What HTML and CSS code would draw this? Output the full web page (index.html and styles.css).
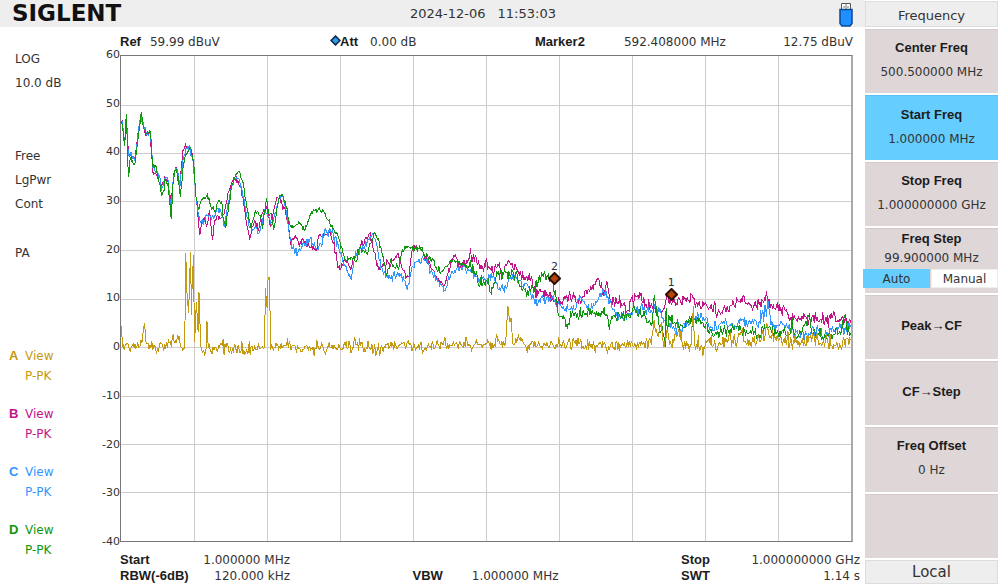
FILE: index.html
```html
<!DOCTYPE html>
<html lang="en">
<head>
<meta charset="utf-8">
<title>SIGLENT Spectrum Analyzer</title>
<link rel="stylesheet" href="styles.css">
</head>
<body>
<div class="screen">
  <main class="main">
    <header class="topbar">
      <span class="logo">SIGLENT</span>
      <span class="clock"><span>2024-12-06</span><span>11:53:03</span></span>
      <svg class="usb" viewBox="0 0 14 24" role="img" aria-label="USB storage">
        <path d="M2.500.5h9v6h-9z" fill="#fff" stroke="#555"/>
        <path d="M7 .5v6M4 4h2M8 4h2" stroke="#777" fill="none"/>
        <path d="M1 6.500h12v14l-2 2.500h-8l-2-2.500z" fill="#1e90ff" stroke="#0b4a94" stroke-width="1.500"/>
      </svg>
    </header>
    <div class="workspace">
      <aside class="status">
        <div class="group"><p>LOG</p><p>10.0 dB</p></div>
        <div class="group sweep"><p>Free</p><p>LgPwr</p><p>Cont</p></div>
        <div class="group preamp"><p>PA</p></div>
        <ul class="traces">
          <li class="trace-a"><b>A</b><span>View<br>P-PK</span></li>
          <li class="trace-b"><b>B</b><span>View<br>P-PK</span></li>
          <li class="trace-c"><b>C</b><span>View<br>P-PK</span></li>
          <li class="trace-d"><b>D</b><span>View<br>P-PK</span></li>
        </ul>
      </aside>
      <section class="display">
        <div class="readout">
          <div class="field"><b>Ref</b><span>59.99 dBuV</span></div>
          <div class="field att">
            <b><svg class="pip" viewBox="0 0 10 10" aria-hidden="true"><path d="M5 1l4 4-4 4-4-4z" fill="#2d9be8" stroke="#0c2f50" stroke-width="1.500"/></svg>Att</b><span>0.00 dB</span>
          </div>
          <div class="field marker-field"><b>Marker2</b><span>592.408000 MHz</span><span class="level">12.75 dBuV</span></div>
        </div>
        <div class="chart">
          <div class="scale">
            <span>60</span><span>50</span><span>40</span><span>30</span><span>20</span><span>10</span><span>0</span><span>-10</span><span>-20</span><span>-30</span><span>-40</span>
          </div>
          <div class="plot">
            <svg class="graph" id="graph" viewBox="120 55 733 487" preserveAspectRatio="none" role="img" aria-label="Spectrum traces A to D"></svg>
            <div class="marker marker-two"><span>2</span><svg viewBox="0 0 13 13"><path d="M6.500 1l5.500 5.500-5.500 5.500-5.500-5.500z" fill="#b8420c" stroke="#2a1005" stroke-width="2"/></svg></div>
            <div class="marker marker-one"><span>1</span><svg viewBox="0 0 13 13"><path d="M6.500 1l5.500 5.500-5.500 5.500-5.500-5.500z" fill="#b8420c" stroke="#2a1005" stroke-width="2"/></svg></div>
          </div>
        </div>
        <footer class="settings">
          <dl class="start"><dt>Start</dt><dd>1.000000 MHz</dd><dt>RBW(-6dB)</dt><dd>120.000 kHz</dd></dl>
          <dl class="vbw"><dt>VBW</dt><dd>1.000000 MHz</dd></dl>
          <dl class="stop"><dt>Stop</dt><dd>1.000000000 GHz</dd><dt>SWT</dt><dd>1.14 s</dd></dl>
        </footer>
      </section>
    </div>
  </main>
  <nav class="menu" aria-label="Frequency menu">
    <h1 class="menu-title">Frequency</h1>
    <div class="keys">
      <button class="key"><b>Center Freq</b><span>500.500000 MHz</span></button>
      <button class="key active"><b>Start Freq</b><span>1.000000 MHz</span></button>
      <button class="key"><b>Stop Freq</b><span>1.000000000 GHz</span></button>
      <div class="key step">
        <b>Freq Step</b><span>99.900000 MHz</span>
        <div class="toggle"><button class="on">Auto</button><button>Manual</button></div>
      </div>
      <button class="key"><b>Peak→CF</b></button>
      <button class="key"><b>CF→Step</b></button>
      <button class="key"><b>Freq Offset</b><span>0 Hz</span></button>
      <button class="key" aria-label="Empty"></button>
    </div>
    <button class="local">Local</button>
  </nav>
</div>
<script src="app.js"></script>
</body>
</html>
```
FILE: styles.css
```css
* { box-sizing: border-box; margin: 0; padding: 0; }
body { background: #fff; color: #333; font: 12px/16px "DejaVu Sans", sans-serif; }
button { border: 0; color: inherit; font: inherit; cursor: pointer; }
b, dt { color: #1c1c1c; font: bold 13px/16px "Liberation Sans", sans-serif; }

.screen { display: grid; grid-template-columns: 1fr 135px; min-height: 100vh; }
.main { display: flex; flex-direction: column; min-width: 0; }

.topbar { display: grid; grid-template-columns: 1fr auto 1fr; align-items: center; height: 27px; padding: 0 12px 0 12px; background: #eee; }
.logo { color: #111; font-size: 23px; font-weight: bold; line-height: 27px; }
.clock { display: flex; gap: 12px; margin-left: 101px; font-size: 13px; }
.usb { justify-self: end; width: 14px; height: 24px; margin-top: 2px; }

.workspace { display: flex; flex: 1; padding-right: 5px; }
.status { width: 100px; padding: 20px 0 0 15px; }
.group p { line-height: 24px; }
.sweep { margin-top: 49px; }
.preamp { margin-top: 25px; }
.traces { display: grid; gap: 18px; margin: 81px 0 0 -6px; list-style: none; line-height: 20px; }
.traces li { display: flex; gap: 5px; }
.traces b { width: 11px; color: inherit; line-height: 20px; }
.trace-a { color: #c49a10; }
.trace-b { color: #c4148a; }
.trace-c { color: #3296ff; }
.trace-d { color: #0f960f; }

.display { display: flex; flex: 1; flex-direction: column; min-width: 0; }
.readout { display: grid; grid-template-columns: 210fr 205fr 318fr; align-items: center; height: 28px; margin: 0 7px 0 20px; padding-top: 2px; white-space: nowrap; }
.field { display: flex; align-items: center; gap: 9px; }
.att { gap: 12px; }
.pip { width: 11px; height: 11px; margin-right: -1px; }
.marker-field { gap: 39px; }
.level { margin-left: auto; }

.chart { display: flex; flex: 1; margin-right: 7px; }
.scale { display: flex; flex-direction: column; justify-content: space-between; width: 20px; margin: -7px 0; font-size: 11px; line-height: 14px; text-align: right; }
.plot { position: relative; flex: 1; border: 1px solid #777; border-right: 2px solid #aaa; }
.graph { position: absolute; inset: 0; width: 100%; height: 100%; }
.graph path { fill: none; vector-effect: non-scaling-stroke; shape-rendering: crispEdges; }
.grid { stroke: #d0ccce; }
.line-a { stroke: #c49a10; }
.line-b { stroke: #c4148a; }
.line-c { stroke: #3296ff; }
.line-d { stroke: #0f960f; }
.marker { position: absolute; width: 13px; margin: -17px 0 0 -6px; font-size: 11px; line-height: 11px; text-align: center; }
.marker span { display: block; }
.marker svg { display: block; width: 13px; height: 13px; }
.marker-two { left: 59.3%; top: 45.8%; }
.marker-one { left: 75.3%; top: 49%; }

.settings { display: flex; justify-content: space-between; align-items: flex-end; margin-left: 20px; padding: 10px 0 1px; white-space: nowrap; }
.settings dl { display: grid; grid-template-columns: auto auto; justify-content: space-between; }
.settings dd { text-align: right; }
.start { width: 170px; }
.vbw { width: 146px; }
.stop { width: 179px; }

.menu { display: flex; flex-direction: column; gap: 2px; padding: 1px 2px 1px 0; }
.menu-title { height: 26px; border: 1px solid #ddd; background: #eee; font-size: 13px; font-weight: normal; line-height: 28px; text-align: center; }
.keys { display: grid; flex: 1; grid-template-rows: repeat(8, 1fr); gap: 2px; }
.key { display: flex; flex-direction: column; align-items: center; justify-content: center; gap: 8px; min-height: 0; padding-bottom: 3px; border-top: 1px solid #d4cacc; background: #dfd6d8; }
.active { border-color: #5cc0f0; background: #66ceff; }
.step { justify-content: flex-start; gap: 3px; padding: 2px 0 0; }
.toggle { display: flex; align-self: stretch; gap: 1px; margin: 0 0 0 -2px; }
.toggle button { flex: 1; height: 19px; border: 1px solid #eee; background: #fff; }
.toggle .on { border-color: #66ceff; background: #66ceff; }
.local { height: 24px; border: 1px solid #ddd; background: #eee; font-size: 15px; line-height: 22px; }
```
FILE: app.js
```js
// Each trace is a list of tiles: [originX, originY, noise, "x,y ..."], points in thirds of a unit.
const traces = {
  a: [
    [110, 240, 4, "32,258 34,320 45,315 60,325 75,325 88,318 95,300 99,260 106,310 120,325 145,322 170,320 190,305 200,285 208,312 222,325 225,40 229,160 233,220 237,120 239,35 242,225 245,110 248,45 252,305 257,185 263,275 265,155 270,320 280,335 286,335 289,242 293,325 310,330 335,318 360,328 400,330 430,330 452,325 461,325 466,145 470,200 473,110 477,110 481,330 497,310 515,325 545,318 570,328 600,325"],
    [310, 230, 4, "3,355 60,355 120,345 180,356 240,350 290,343 320,352 400,345 478,345"],
    [470, 230, 4, "0,345 50,340 60,345 75,345 83,320 92,345 108,345 115,228 120,275 125,265 131,345 150,330 165,345 205,348 250,345 280,345 315,335 350,348 410,350 455,350 487,335 500,350 520,345 545,335 556,270 565,310 569,320"],
    [640, 250, 5, "60,250 68,220 75,290 85,240 93,285 105,280 120,240 132,285 145,288 157,290 164,168 168,285 190,290 215,285 245,280 265,270 290,275 313,235 320,275 345,272 368,270 387,225 400,268 430,270 460,275 490,275 515,265 540,275 570,280 605,285 638,270"]
  ],
  b: [
    [110, 100, 2, "32,60 36,85 41,130 47,60 52,150 58,170 66,170 74,160 82,90 91,45 98,80 108,105 118,95 126,215 135,220 143,240 152,255 162,230 172,245 181,320 188,220 198,205 207,265 216,150 224,132 232,145 241,150 249,200 256,290 262,350 267,405 275,365 283,350 290,370 297,330 305,420 312,360 322,345 335,350 345,320 352,280 362,250 372,235 382,240 392,262 402,330 410,380 418,420 424,380 435,365 445,390 452,350 460,330 470,325 480,380 490,330 500,290 508,288 515,310 525,330 535,375 539,415"],
    [290, 180, 3, "0,180 15,165 25,185 40,185 55,195 70,200 80,210 85,170 100,160 120,148 130,190 140,235 150,270 160,250 172,240 180,262 192,235 205,215 218,195 228,170 238,160 248,195 258,240 268,262 280,250 295,248 310,240 325,220 335,260 350,290 358,290 365,220 375,208 390,200 400,215 415,240 430,270 445,295 458,310 470,300 482,255 497,225 508,250 520,260 530,250 537,235"],
    [470, 230, 4, "0,80 20,82 32,115 45,98 60,115 75,118 85,105 97,125 110,105 125,105 140,112 155,135 170,140 185,145 195,170 205,195 220,185 235,200 250,205 265,230 275,215 290,205 310,200 325,212 345,200 362,185 370,165 382,148 392,165 405,180 415,160 422,205 435,215 450,220 462,225 478,240 488,205 500,200 515,195 530,225 545,230 569,238"],
    [640, 250, 4, "61,180 72,182 80,155 94,150 110,165 125,155 140,148 165,145 180,160 195,165 215,175 240,180 260,175 280,168 300,155 325,160 345,170 365,155 387,145 400,165 415,165 430,190 437,170 450,195 465,210 480,200 500,200 520,205 540,215 565,210 585,195 600,210 620,215 638,218"]
  ],
  c: [
    [110, 100, 2, "32,60 36,80 41,120 47,70 52,165 60,155 66,175 74,165 82,95 91,42 98,75 108,95 118,100 126,200 136,215 146,225 152,270 162,235 172,240 181,330 188,225 198,203 208,255 218,170 228,145 238,142 247,180 256,290 263,345 270,365 280,360 290,345 300,350 310,355 320,325 330,330 343,375 352,310 362,260 375,235 385,235 395,270 405,325 415,375 425,390 435,375 445,400 455,370 462,330 470,340 484,375 495,340 505,295 514,282 522,310 532,360 539,410"],
    [290, 180, 3, "0,180 15,215 25,210 38,190 45,190 60,175 70,195 80,205 90,190 100,170 110,155 122,147 135,170 145,200 158,240 170,270 183,298 192,240 205,215 220,205 232,180 245,168 258,185 268,240 278,270 290,285 305,285 320,285 335,280 345,300 353,328 360,290 370,260 385,245 400,235 415,250 430,285 445,305 458,320 467,330 475,300 485,275 500,268 520,262 537,272"],
    [470, 230, 3, "0,120 15,135 30,150 45,148 60,140 70,138 80,160 90,175 110,175 120,145 135,135 150,150 165,165 180,175 190,195 205,225 215,205 230,210 250,200 265,225 280,235 300,238 315,240 325,215 337,205 350,225 365,240 378,225 390,200 405,185 418,205 430,240 440,255 455,260 465,265 480,250 495,240 510,240 525,230 540,245 569,235"],
    [640, 250, 4, "65,185 75,215 90,215 105,230 125,240 145,215 165,205 185,200 200,210 215,230 235,240 250,215 275,225 295,235 310,210 325,225 345,222 365,220 372,180 376,215 380,165 384,200 388,150 398,225 410,225 430,215 450,235 475,245 500,255 520,240 540,240 560,255 580,245 605,220 620,235 638,225"]
  ],
  d: [
    [110, 100, 2, "32,60 36,90 41,135 46,40 52,228 58,170 64,180 72,188 82,110 91,35 97,75 105,100 112,95 119,95 126,200 134,195 142,230 153,285 165,240 172,250 181,355 188,230 197,207 203,240 209,290 218,190 228,160 238,140 248,180 256,290 264,330 272,300 280,290 290,282 300,315 314,335 322,305 332,305 340,360 346,383 355,310 365,250 377,222 385,212 395,240 405,290 414,350 422,385 432,340 440,335 450,345 457,385 468,292 474,330 482,340 490,388 497,345 505,295 515,282 525,305 535,355 539,375"],
    [290, 180, 2, "0,135 10,140 20,132 30,130 42,150 52,125 62,100 72,92 85,87 95,97 105,100 115,120 128,145 140,160 150,185 160,220 168,240 178,235 190,230 198,245 208,205 218,210 232,222 242,190 252,160 265,175 275,215 290,285 300,250 315,262 328,258 338,210 350,200 362,205 375,207 390,198 400,215 415,230 430,240 445,272 460,272 475,255 490,240 510,245 525,255 537,262"],
    [470, 230, 4, "0,100 15,125 25,155 40,160 52,150 65,190 75,160 85,130 95,122 110,128 130,125 145,145 160,180 175,180 188,165 198,185 208,150 220,135 235,138 248,155 260,200 270,260 280,265 292,282 302,270 312,250 325,255 345,250 360,240 375,250 390,258 400,245 413,255 421,300 430,265 450,252 475,250 500,250 520,260 540,275 550,280 557,195 563,250 569,270"],
    [640, 250, 4, "64,250 70,230 80,290 82,175 86,245 95,200 105,220 125,225 145,215 165,205 180,215 200,235 215,240 235,255 255,240 275,240 290,230 310,245 330,250 345,255 365,255 387,225 400,250 415,250 430,245 455,255 462,205 467,250 490,255 512,200 520,250 540,255 565,265 585,255 605,245 622,205 628,255 638,250"]
  ]
};

let seed = 7;
function random() {
  seed = (seed * 16807) % 2147483647;
  return seed / 2147483647 - 0.5;
}

function tracePath(tiles) {
  const keys = tiles.flatMap(([ox, oy, noise, list]) =>
    list.split(" ").map(pair => {
      const [x, y] = pair.split(",").map(Number);
      return { x: ox + x / 3, y: oy + y / 3, noise };
    })).filter((p, i, all) => i === 0 || p.x > all[i - 1].x);
  const points = [];
  keys.forEach((p, i) => {
    points.push([p.x, p.y]);
    const next = keys[i + 1];
    if (!next) return;
    const steps = Math.floor(next.x - p.x);
    for (let s = 1; s <= steps; s++) {
      const t = s / (steps + 1);
      const jitter = random() * p.noise * (random() > 0.3 ? 4.5 : 2.4);
      points.push([p.x + (next.x - p.x) * t, p.y + (next.y - p.y) * t + jitter]);
    }
  });
  return "M" + points.map(([x, y]) => x.toFixed(1) + " " + y.toFixed(1)).join("L");
}

function addPath(className, d) {
  const path = document.createElementNS("http://www.w3.org/2000/svg", "path");
  path.setAttribute("class", className);
  path.setAttribute("d", d);
  document.getElementById("graph").append(path);
}

let grid = "";
for (let i = 1; i < 10; i++) {
  grid += `M${Math.round(120 + i * 73.3) + 0.5} 55v487M120 ${Math.round(55 + i * 48.7) + 0.5}h733`;
}
addPath("grid", grid);
for (const name of ["b", "c", "d", "a"]) addPath("line-" + name, tracePath(traces[name]));
```
